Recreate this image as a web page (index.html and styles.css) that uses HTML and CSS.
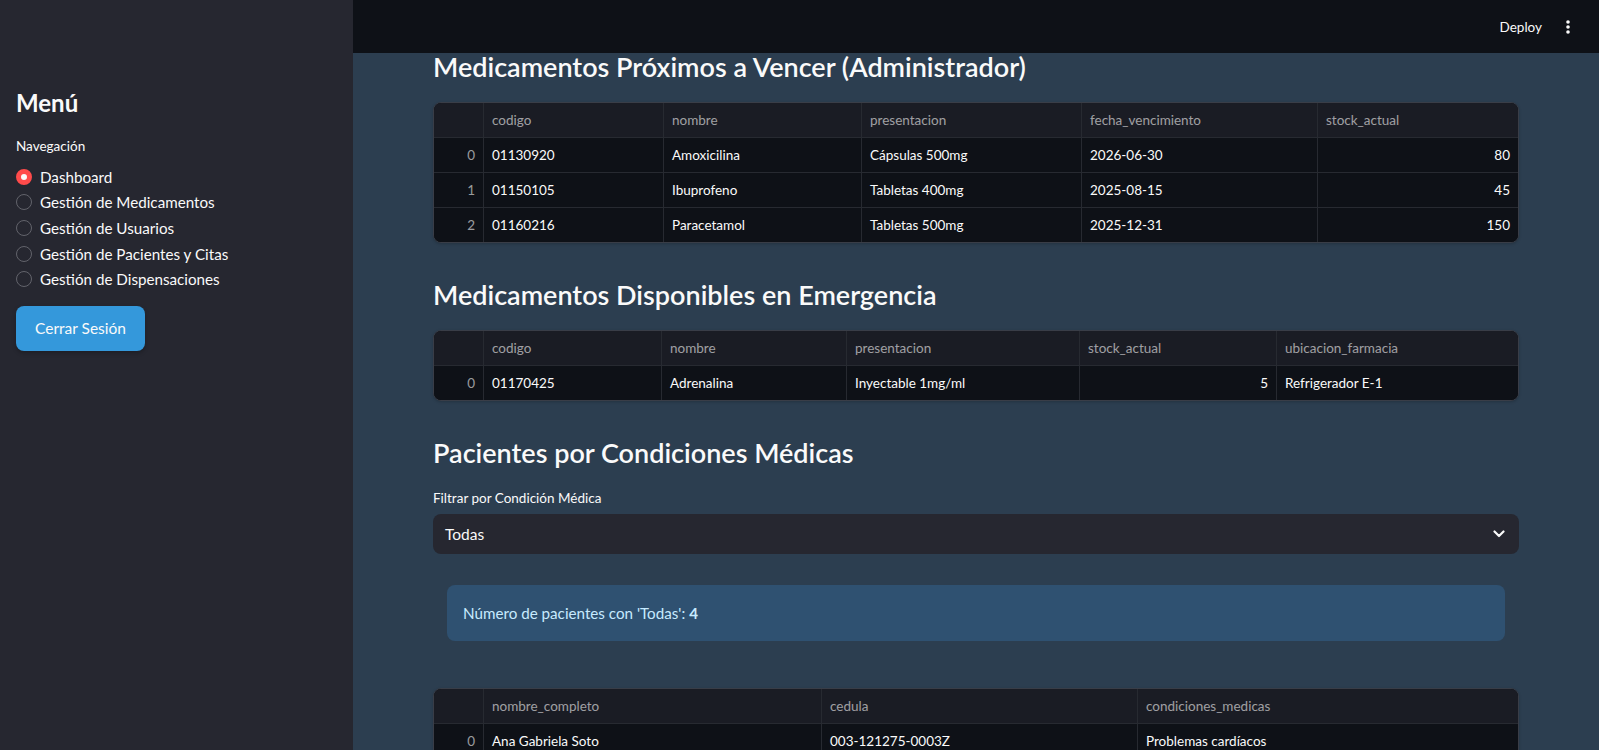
FILE: index.html
```html
<!DOCTYPE html>
<html lang="es">
<head>
<meta charset="utf-8">
<title>Dashboard</title>
<link rel="stylesheet" href="styles.css">
</head>
<body>
<div class="app">
  <aside class="sidebar">
    <h2 class="side-title">Menú</h2>
    <div class="side-label">Navegación</div>
    <ul class="radios">
      <li class="radio on"><span class="dot"></span>Dashboard</li>
      <li class="radio"><span class="dot"></span>Gestión de Medicamentos</li>
      <li class="radio"><span class="dot"></span>Gestión de Usuarios</li>
      <li class="radio"><span class="dot"></span>Gestión de Pacientes y Citas</li>
      <li class="radio"><span class="dot"></span>Gestión de Dispensaciones</li>
    </ul>
    <button class="btn">Cerrar Sesión</button>
  </aside>
  <main class="main">
    <header class="topbar">
      <span class="deploy">Deploy</span>
      <span class="kebab"><svg width="4" height="14" viewBox="0 0 4 14"><circle cx="2" cy="2" r="1.8" fill="#fafafa"/><circle cx="2" cy="7" r="1.8" fill="#fafafa"/><circle cx="2" cy="12" r="1.8" fill="#fafafa"/></svg></span>
    </header>
    <div class="content">
      <h3 class="section first">Medicamentos Próximos a Vencer (Administrador)</h3>
      <div class="df t1">
        <div class="r">
          <div class="h"></div><div class="h">codigo</div><div class="h">nombre</div><div class="h">presentacion</div><div class="h">fecha_vencimiento</div><div class="h">stock_actual</div>
        </div>
        <div class="r">
          <div class="i">0</div><div>01130920</div><div>Amoxicilina</div><div>Cápsulas 500mg</div><div>2026-06-30</div><div class="n">80</div>
        </div>
        <div class="r">
          <div class="i">1</div><div>01150105</div><div>Ibuprofeno</div><div>Tabletas 400mg</div><div>2025-08-15</div><div class="n">45</div>
        </div>
        <div class="r">
          <div class="i">2</div><div>01160216</div><div>Paracetamol</div><div>Tabletas 500mg</div><div>2025-12-31</div><div class="n">150</div>
        </div>
      </div>

      <h3 class="section">Medicamentos Disponibles en Emergencia</h3>
      <div class="df t2">
        <div class="r">
          <div class="h"></div><div class="h">codigo</div><div class="h">nombre</div><div class="h">presentacion</div><div class="h">stock_actual</div><div class="h">ubicacion_farmacia</div>
        </div>
        <div class="r">
          <div class="i">0</div><div>01170425</div><div>Adrenalina</div><div>Inyectable 1mg/ml</div><div class="n">5</div><div>Refrigerador E-1</div>
        </div>
      </div>

      <h3 class="section">Pacientes por Condiciones Médicas</h3>
      <div class="field-label">Filtrar por Condición Médica</div>
      <div class="select">
        <span>Todas</span>
        <svg class="chev" width="12" height="8" viewBox="0 0 12 8"><path d="M1.5 1.5 L6 6 L10.5 1.5" fill="none" stroke="#fafafa" stroke-width="2.2" stroke-linecap="round" stroke-linejoin="round"/></svg>
      </div>
      <div class="info-wrap">
        <div class="info">Número de pacientes con 'Todas': <b>4</b></div>
      </div>
      <div class="df t3">
        <div class="r">
          <div class="h"></div><div class="h">nombre_completo</div><div class="h">cedula</div><div class="h">condiciones_medicas</div>
        </div>
        <div class="r">
          <div class="i">0</div><div>Ana Gabriela Soto</div><div>003-121275-0003Z</div><div>Problemas cardíacos</div>
        </div>
      </div>
    </div>
  </main>
</div>
</body>
</html>
```
FILE: styles.css
```css
* { box-sizing: border-box; }
html, body { margin: 0; height: 100%; }
body {
  font-family: Lato, "Noto Sans", sans-serif;
  background: #2c3e50;
  color: #fafafa;
  overflow: hidden;
}
.app { display: flex; height: 100vh; }

/* Sidebar */
.sidebar {
  width: 353px;
  flex: none;
  background: #262730;
  padding: 0 16px;
}
.side-title {
  margin: 88px 0 0;
  font-size: 24px;
  font-weight: 700;
  line-height: 30px;
}
.side-label {
  margin-top: 18px;
  font-size: 13.5px;
  line-height: 20px;
}
.radios {
  list-style: none;
  margin: 8px 0 0;
  padding: 0;
}
.radio {
  display: flex;
  align-items: center;
  height: 25.6px;
  font-size: 15.2px;
}
.dot {
  width: 16px;
  height: 16px;
  border-radius: 50%;
  border: 1.5px solid #62636b;
  margin-right: 8px;
  flex: none;
}
.radio.on .dot {
  border: 5px solid #ff4b4b;
  background: #fafafa;
}
.btn {
  margin-top: 14px;
  width: 129px;
  height: 45px;
  border: 0;
  border-radius: 8px;
  background: #3498db;
  color: #fafafa;
  font-family: inherit;
  font-size: 15.5px;
  box-shadow: 0 2px 4px rgba(0,0,0,0.25);
}

/* Main */
.main { flex: 1; display: flex; flex-direction: column; min-width: 0; }
.topbar {
  height: 53px;
  flex: none;
  background: #0e1117;
  display: flex;
  align-items: center;
  justify-content: flex-end;
  padding-right: 19px;
}
.deploy { font-size: 13.5px; margin-right: 14px; }
.kebab {
  width: 24px;
  height: 24px;
  display: flex;
  align-items: center;
  justify-content: center;
}
.content { padding: 0 80px; }

.section {
  font-size: 27px;
  font-weight: 600;
  line-height: 28px;
  margin: 38px 0 21px;
}
.section.first { margin-top: 0; margin-bottom: 21px; }

/* Dataframes */
.df {
  display: grid;
  border: 1px solid #393d47;
  border-radius: 8px;
  overflow: hidden;
  font-size: 13.5px;
  background: #0e1117;
  box-shadow: 0 1px 3px rgba(0,0,0,0.2);
}
.t1 { grid-template-columns: 50px 180px 198px 220px 236px 1fr; }
.t2 { grid-template-columns: 50px 178px 185px 233px 197px 1fr; }
.t3 { grid-template-columns: 50px 338px 316px 1fr; }
.r { display: contents; }
.r > div {
  height: 35px;
  display: flex;
  align-items: center;
  padding: 0 8px;
  border-right: 1px solid #272a31;
  border-bottom: 1px solid #272a31;
  white-space: nowrap;
  background: #0e1117;
}
.r > div:last-child { border-right: 0; }
.r:last-child > div { border-bottom: 0; height: 34px; }
.r > .h { background: #1a1c24; color: rgba(250,250,250,0.6); }
.r > .i { justify-content: flex-end; color: rgba(250,250,250,0.6); }
.r > .n { justify-content: flex-end; }

/* Filter */
.field-label {
  font-size: 13.5px;
  line-height: 20px;
  margin-top: 22px;
}
.section + .field-label { margin-top: 0; }
.select {
  margin-top: 6px;
  height: 40px;
  background: #262730;
  border-radius: 8px;
  display: flex;
  align-items: center;
  justify-content: space-between;
  padding: 0 14px 0 12px;
  font-size: 15.5px;
}
.info-wrap { padding: 31px 14px 0; }
.info {
  height: 56px;
  border-radius: 8px;
  background: #2f5171;
  color: #c7ebff;
  font-size: 15.2px;
  display: flex;
  align-items: center;
  padding: 0 16px;
}
.info b { font-weight: 700; margin-left: 4px; }
.info-wrap + .df { margin-top: 47px; }
```
